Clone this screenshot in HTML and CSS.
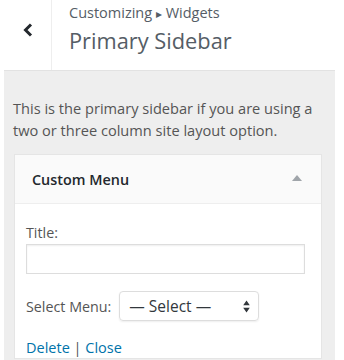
FILE: index.html
```html
<!DOCTYPE html>
<html>
<head>
<meta charset="utf-8">
<link rel="stylesheet" href="styles.css">
</head>
<body>
<div class="header">
  <div class="back">
    <svg width="12" height="14" viewBox="0 0 12 14"><path d="M9 1.5 L3.5 7 L9 12.5" fill="none" stroke="#23282d" stroke-width="3"/></svg>
  </div>
  <div class="titles">
    <div class="crumb">Customizing <span class="tri">&#9656;</span> Widgets</div>
    <div class="title">Primary Sidebar</div>
  </div>
</div>
<div class="panel">
  <p class="desc">This is the primary sidebar if you are using a two or three column site layout option.</p>
  <div class="widget">
    <div class="widget-top">
      <span class="widget-name">Custom Menu</span>
      <span class="arrow"></span>
    </div>
    <div class="widget-inside">
      <label class="lbl">Title:</label>
      <div class="input"></div>
      <div class="select-row">
        <span class="sel-lbl">Select Menu:</span>
        <div class="select"><span>— Select —</span>
          <svg width="7" height="13" viewBox="0 0 7 13"><path d="M3.5 0.5 L6.8 5.3 L0.2 5.3 Z M3.5 12.5 L6.8 7.7 L0.2 7.7 Z" fill="#32373c"/></svg>
        </div>
      </div>
      <div class="actions"><a class="link">Delete</a> <span class="sep">|</span> <a class="link">Close</a></div>
    </div>
  </div>
</div>
</body>
</html>
```
FILE: styles.css
```css
html, body { margin: 0; padding: 0; background: #fff; }
body { font-family: "Open Sans", sans-serif; color: #555; width: 344px; height: 360px; overflow: hidden; }
.header { display: flex; height: 70px; }
.back { width: 52px; border-right: 1px solid #eee; display: flex; align-items: flex-start; justify-content: center; padding-left: 4px; padding-top: 23px; box-sizing: border-box; }
.titles { padding-left: 17px; padding-top: 1px; }
.crumb { font-size: 14.5px; line-height: 24px; color: #555d66; }
.tri { font-size: 12px; }
.title { font-size: 21.8px; line-height: 30px; color: #555d66; margin-top: 0; }
.panel { margin: 0 9px 0 4px; background: #eee; border-top: 1px solid #e2e2e2; padding: 26px 13px 20px 9px; height: 300px; }
.desc { margin: 0 -8px 0 0; font-size: 14.6px; line-height: 22px; color: #555; }
.widget { margin-top: 13px; background: #fff; border: 1px solid #e5e5e5; margin-left: 1px; }
.widget-top { height: 48px; background: #fafafa; border-bottom: 1px solid #eee; display: flex; align-items: center; justify-content: space-between; padding: 0 17px 0 17px; }
.widget-name { font-size: 14.4px; font-weight: 600; color: #23282d; }
.arrow { width: 0; height: 0; border-left: 5px solid transparent; border-right: 5px solid transparent; border-bottom: 6px solid #a0a5aa; margin-right: 2px; margin-top: -2px; }
.widget-inside { padding: 20px 16px 0 11px; }
.lbl { display: block; font-size: 14.3px; line-height: 18px; color: #555; }
.input { margin-top: 2px; height: 28px; border: 1px solid #ddd; box-shadow: inset 0 1px 2px rgba(0,0,0,.07); }
.select-row { display: flex; align-items: center; margin-top: 17px; }
.sel-lbl { font-size: 14.3px; color: #555; margin-right: 8px; }
.select { width: 140px; height: 30px; box-sizing: border-box; border: 1px solid #ddd; border-radius: 4px; box-shadow: 0 1px 2px rgba(0,0,0,.07); display: flex; align-items: center; justify-content: space-between; padding: 0 8px 0 9px; font-size: 15.5px; color: #32373c; }
.actions { margin-top: 17px; font-size: 14.5px; line-height: 20px; }
.link { color: #0073aa; }
.sep { color: #555; }
```
